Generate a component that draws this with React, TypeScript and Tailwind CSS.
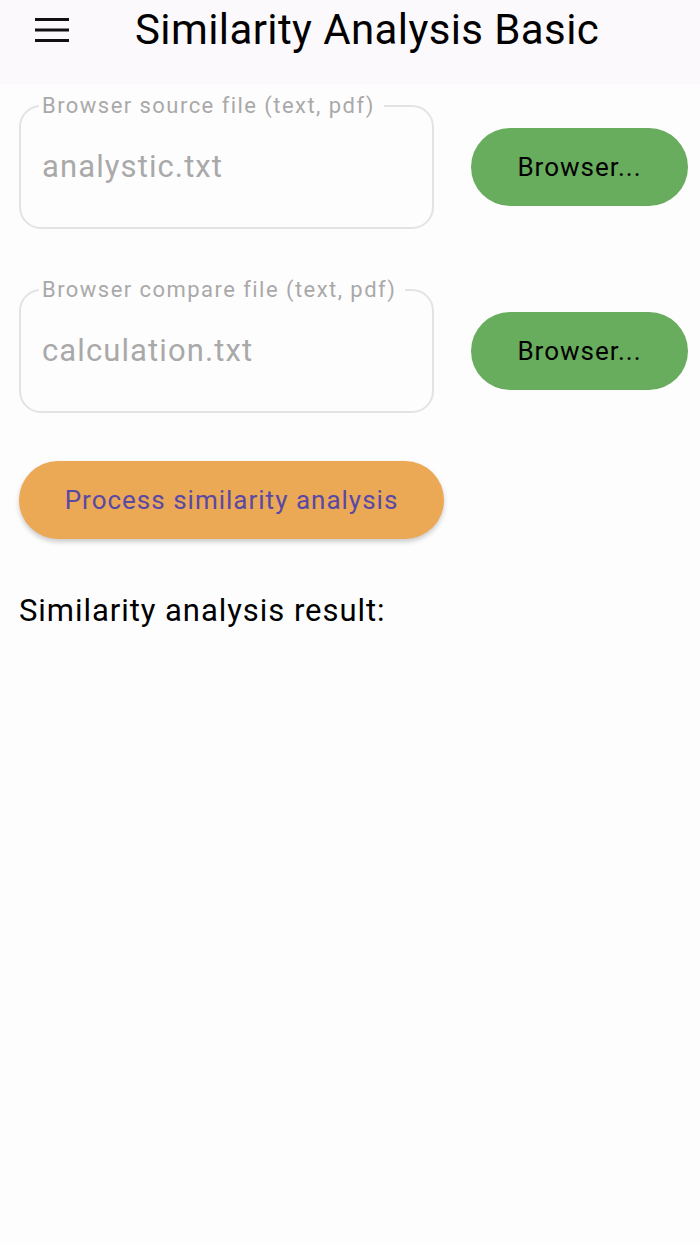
interface FileFieldProps {
  label: string
  value: string
}

function FileField({ label, value }: FileFieldProps) {
  return (
    <div className="flex items-center">
      <fieldset className="shrink-0 w-[415px] h-[134px] border-2 border-[#e3e3e3] rounded-[22px] pl-[21px] pr-4 -mt-[10px]">
        <legend className="-ml-[3px] pl-[3px] pr-[9px] text-[22px] leading-[22px] tracking-[1.45px] text-[#a9a9a9]">
          {label}
        </legend>
        <div className="mt-[31px] text-[31px] leading-[38px] tracking-[1.1px] text-[#a9a9a9]">
          {value}
        </div>
      </fieldset>
      <button className="shrink-0 ml-[37px] w-[217px] h-[78px] rounded-full bg-[#68ad5d] text-[26px] tracking-[1px] text-black">
        Browser...
      </button>
    </div>
  )
}

export default function App() {
  return (
    <div
      className="min-h-[1244px] bg-[#fefdfe] text-black"
      style={{ fontFamily: 'Roboto, "Noto Sans", sans-serif' }}
    >
      {/* Top bar */}
      <header className="h-[84px] bg-[#fcf9fc] flex items-start">
        <div className="w-[104px] pt-[18px] pl-[35px]">
          <svg width="34" height="25" viewBox="0 0 34 25">
            <rect x="0" y="0" width="34" height="3" fill="#111" />
            <rect x="0" y="10.5" width="34" height="3" fill="#111" />
            <rect x="0" y="21" width="34" height="3" fill="#111" />
          </svg>
        </div>
        <h1 className="pt-[4px] pl-[31px] text-[42px] leading-[52px] tracking-[0.4px]">
          Similarity Analysis Basic
        </h1>
      </header>

      {/* Form */}
      <div className="px-[19px] pt-[21px]">
        <FileField label="Browser source file (text, pdf)" value="analystic.txt" />
        <div className="h-[60px]" />
        <FileField label="Browser compare file (text, pdf)" value="calculation.txt" />

        <button className="mt-[48px] w-[425px] h-[78px] rounded-full bg-[#eba855] text-[26px] tracking-[1px] text-[#5a48a5] shadow-[0_3px_5px_rgba(0,0,0,0.2)]">
          Process similarity analysis
        </button>

        <p className="mt-[53px] text-[31px] leading-[38px] tracking-[0.95px]">
          Similarity analysis result:
        </p>
      </div>
    </div>
  )
}
